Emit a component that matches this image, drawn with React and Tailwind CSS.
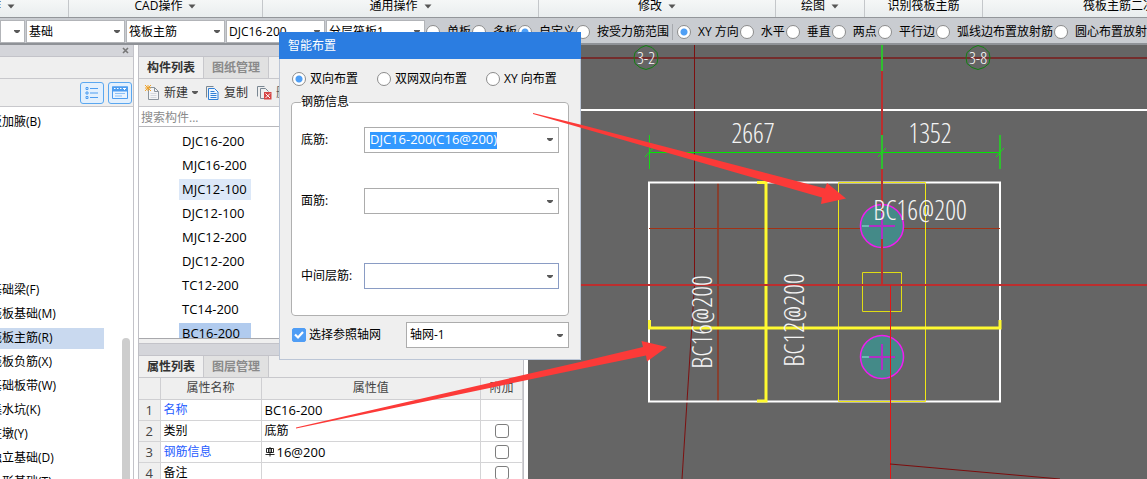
import React from "react";

const UI = "font-['Open_Sans','Noto_Sans_CJK_SC',sans-serif]";
const CAD_FONT = "'Open Sans Condensed Light', 'Roboto Condensed Light', 'Roboto Condensed', 'Liberation Sans Narrow', 'Noto Sans CJK SC', sans-serif";

function Caret({ className = "" }) {
  return (
    <svg viewBox="0 0 8 5" className={`h-[5px] w-2 shrink-0 ${className}`} aria-hidden="true">
      <path d="M0.5 0.5h7L4 4.5z" fill="#555" />
    </svg>
  );
}

function SmallCaret({ className = "" }) {
  return (
    <svg viewBox="0 0 6 4" className={`h-1 w-1.5 shrink-0 ${className}`} aria-hidden="true">
      <path d="M0 0h6v1L4 3H2L0 1z" fill="#5a5a5a" />
    </svg>
  );
}

function RibbonGroup({ label, className, caret = true }) {
  return (
    <div className={`flex h-full shrink-0 items-start overflow-hidden ${className}`}>
      <button type="button" className="flex shrink-0 items-center gap-1.5 text-xs leading-3 whitespace-nowrap">
        {label}
        {caret && <Caret />}
      </button>
    </div>
  );
}

function BarSelect({ label, value, className }) {
  return (
    <div className={`relative h-[23px] shrink-0 border border-[#b2b4b8] bg-white ${className}`}>
      <select aria-label={label} className="h-full w-full appearance-none truncate bg-transparent pl-0.5 text-xs outline-none">
        <option>{value}</option>
      </select>
      <SmallCaret className="pointer-events-none absolute top-[9px] right-1" />
    </div>
  );
}

function Radio({ name, label, checked, tight }) {
  return (
    <label className={`flex shrink-0 items-center whitespace-nowrap ${tight ? "gap-1" : "gap-[7px] pr-px"}`}>
      <input
        type="radio"
        name={name}
        defaultChecked={checked}
        className="h-3.5 w-3.5 shrink-0 appearance-none rounded-full border border-[#8c8c8c] bg-white checked:bg-[radial-gradient(circle,#4f9ff5_0_3px,#fff_4px)]"
      />
      <span>{label}</span>
    </label>
  );
}

const drawModes = ["单板", "多板", "自定义", "按受力筋范围"];
const directions = ["XY 方向", "水平", "垂直", "两点", "平行边", "弧线边布置放射筋", "圆心布置放射筋"];

function Toolbar() {
  return (
    <div className="flex h-[27px] shrink-0 items-start overflow-hidden border-b-2 border-[#8f9297] bg-[#c9ccd1] pt-0.5 text-xs">
      <div className="flex shrink-0 gap-px">
        <BarSelect label="楼层" value="" className="w-[25px]" />
        <BarSelect label="构件大类" value="基础" className="w-[99px]" />
        <BarSelect label="构件类型" value="筏板主筋" className="w-[99px]" />
        <BarSelect label="构件" value="DJC16-200" className="w-[99px]" />
        <BarSelect label="分层" value="分层筏板1" className="w-[99px]" />
      </div>
      <div className="ml-px flex h-[23px] shrink-0 items-center">
        {drawModes.map((m) => (
          <Radio key={m} name="mode" label={m} checked={m === "自定义"} />
        ))}
        <span className="mr-1 ml-0.5 h-4 w-px bg-[#a6a9ae]" />
        {directions.map((m) => (
          <Radio key={m} name="direction" label={m} checked={m === "XY 方向"} />
        ))}
      </div>
    </div>
  );
}

const tree = [
  "筏板基础(M)",
  "筏板主筋(R)",
  "筏板负筋(X)",
  "基础板带(W)",
  "集水坑(K)",
  "柱墩(Y)",
  "独立基础(D)",
  "条形基础(T)",
];

function TreeItem({ label, active }) {
  return (
    <li className="flex h-6 shrink-0 items-center">
      <button type="button" className={`h-[21px] w-[104px] text-left whitespace-nowrap ${active ? "bg-[#c9d9ef]" : ""}`}>
        <span className="-ml-2.5">{label}</span>
      </button>
    </li>
  );
}

function TreePanel() {
  return (
    <aside className="flex w-[134px] shrink-0 flex-col overflow-hidden border-r border-[#c3c3c9] bg-white text-xs">
      <div className="flex h-3 shrink-0 items-center justify-end border-b border-[#c3c3c9] bg-[#d4d5da] pr-1">
        <button type="button" aria-label="关闭">
          <svg viewBox="0 0 7 7" className="h-[7px] w-[7px]">
            <path d="M1 1l5 5M6 1L1 6" stroke="#777" strokeWidth="1.6" />
          </svg>
        </button>
      </div>
      <div className="h-[22px] shrink-0 border-b border-[#c8c8cc] bg-[#efefef]" />
      <div className="flex h-7 shrink-0 items-center justify-end gap-1 border-b border-[#c8c8cc] bg-[#efefef] pr-px">
        <button type="button" aria-label="列表视图" className="flex h-[22px] w-6 items-center justify-center rounded-[3px] border border-[#5aa7f0] bg-[#e3f0fd]">
          <svg viewBox="0 0 14 14" className="h-3.5 w-3.5" fill="none" stroke="#4d9df0">
            <path d="M1 1.5h2v2H1zM1 6h2v2H1zM1 10.500h2v2H1z" />
            <path d="M5 2.500h8M5 7h8M5 11.500h8" />
          </svg>
        </button>
        <button type="button" aria-label="面板视图" className="flex h-[22px] w-6 items-center justify-center rounded-[3px] border border-[#5aa7f0] bg-[#e3f0fd]">
          <svg viewBox="0 0 16 14" className="h-3.5 w-4">
            <path d="M0.500 1h15v11.500h-15z" fill="#e9f4ff" stroke="#4d9df0" />
            <path d="M0 0.500h16v5H0z" fill="#4d9df0" />
            <path d="M2 2.500h1.500M5 2.500h1.500M8 2.500h1.500M11 2.500h3M12.500 2v2" stroke="#fff" />
            <path d="M3 7.500h10M3 10h7" stroke="#8cc0f5" />
          </svg>
        </button>
      </div>
      <div className="flex min-h-0 flex-1">
        <ul className="min-w-0 flex-1 overflow-hidden pt-[3px]">
          <TreeItem label="板加腋(B)" />
          <li className="h-36" aria-hidden="true" />
          <TreeItem label="基础梁(F)" />
          {tree.map((t) => (
            <TreeItem key={t} label={t} active={t === "筏板主筋(R)"} />
          ))}
        </ul>
        <div className="mr-[3px] flex w-2 shrink-0 flex-col pt-[231px]">
          <div className="flex-1 rounded-t bg-[#cdcdcd]" />
        </div>
      </div>
    </aside>
  );
}

function Tabs({ items }) {
  return (
    <div role="tablist" className="flex h-[22px] shrink-0 border-b border-[#c8c8cc] bg-[#efefef] text-xs font-semibold">
      {items.map((t, i) => (
        <button
          key={t}
          type="button"
          role="tab"
          aria-selected={i === 0}
          className={`w-[65px] border-r border-[#c8c8cc] ${i === 0 ? "bg-[#f0f0f0] text-[#333]" : "bg-[#e1e1e1] text-[#8a8a8a]"}`}
        >
          {t}
        </button>
      ))}
    </div>
  );
}

const components = ["DJC16-200", "MJC16-200", "MJC12-100", "DJC12-100", "MJC12-200", "DJC12-200", "TC12-200", "TC14-200", "BC16-200"];

const rows = [
  { name: "名称", value: "BC16-200", blue: true },
  { name: "类别", value: "底筋", check: true },
  { name: "钢筋信息", value: "16@200", blue: true, check: true, rebar: true },
  { name: "备注", value: "", check: true },
];

function RebarSign() {
  return (
    <svg viewBox="0 0 10 10" className="h-2.5 w-2.5" fill="none" stroke="#111" aria-hidden="true">
      <path d="M1.500 1.500h7v4h-7zM3.500 1v5M6.500 1v5M5 0v9.500M0.500 7.500h9" strokeWidth="0.9" />
    </svg>
  );
}

function PropertyTable() {
  return (
    <table className="w-full table-fixed border-collapse bg-white text-xs">
      <colgroup>
        <col className="w-[21px]" />
        <col className="w-[101px]" />
        <col />
        <col className="w-[42px]" />
      </colgroup>
      <thead>
        <tr className="h-[21px] bg-[#efefef] text-[#444]">
          <th className="border-r border-b border-[#cfcfd2] p-0" />
          <th className="border-r border-b border-[#cfcfd2] p-0 font-normal">属性名称</th>
          <th className="border-r border-b border-[#cfcfd2] p-0 font-normal">属性值</th>
          <th className="border-r border-b border-[#cfcfd2] p-0 font-normal">附加</th>
        </tr>
      </thead>
      <tbody>
        {rows.map((r, i) => (
          <tr key={r.name} className="h-[21px]">
            <td className="border-r border-b border-[#d4d4d6] bg-[#efefef] p-0 text-center text-[13px] leading-4 text-[#444]">{i + 1}</td>
            <td className={`border-r border-b border-[#d4d4d6] py-0 pr-0 pl-[3px] leading-4 ${r.blue ? "text-[#1f5cff]" : ""}`}>{r.name}</td>
            <td className="border-r border-b border-[#d4d4d6] py-0 pr-0 pl-[3px] leading-4">
              <span className={`flex items-center gap-0.5 ${r.value === "底筋" ? "" : "text-[13px]"}`}>
                {r.rebar && <RebarSign />}
                {r.value}
              </span>
            </td>
            <td className="border-r border-b border-[#d4d4d6] p-0">
              {r.check && (
                <input type="checkbox" aria-label={`附加 ${r.name}`} className="mx-auto block h-3.5 w-3.5 appearance-none rounded-[3px] border border-[#7d7d7d] bg-white" />
              )}
            </td>
          </tr>
        ))}
      </tbody>
    </table>
  );
}

function ComponentPanel() {
  return (
    <section className="ml-1 flex w-[386px] shrink-0 flex-col overflow-hidden border-r border-l border-[#c0c0c6] bg-[#efefef]">
      <div className="h-3 shrink-0 border-b border-[#c3c3c9] bg-[#d4d5da]" />
      <Tabs items={["构件列表", "图纸管理"]} />
      <div className="flex h-7 shrink-0 items-center border-b border-[#c8c8cc] pl-1.5 text-xs text-[#333]">
        <button type="button" className="flex items-center gap-1">
          <svg viewBox="0 0 15 15" className="h-[15px] w-[15px]" fill="none">
            <path d="M3.500 2.500h6l4 4v8h-10z" fill="#f4f5f6" stroke="#8b949c" />
            <path d="M9.500 2.500v4h4" stroke="#8b949c" />
            <path d="M5.500 8.500h6M5.500 10.500h6M5.500 12.500h6" stroke="#d4d8dc" />
            <path d="M0 0l6 6M6 0L0 6M3 0v6M0 3h6" stroke="#f0a42c" />
          </svg>
          新建
          <SmallCaret />
        </button>
        <button type="button" className="ml-2 flex items-center gap-[5px]">
          <svg viewBox="0 0 13 14" className="h-3.5 w-[13px]" fill="none">
            <path d="M0.500 11.500v-11h7" stroke="#7a8792" />
            <path d="M2.500 2.500h6l3.500 3.500v7.500H2.500z" fill="#eef6ff" stroke="#2f7fd6" />
            <path d="M4.500 5.500h4M4.500 7.500h6M4.500 9.500h6M4.500 11.500h6" stroke="#2f7fd6" />
          </svg>
          复制
        </button>
        <button type="button" className="ml-[9px] flex items-center gap-1 text-[#555]">
          <svg viewBox="0 0 15 14" className="h-3.5 w-[15px]" fill="none">
            <path d="M0.500 10.500v-10h7M7 12.500H3.500v-10h5l3 3" stroke="#7a8792" />
            <path d="M7 6h7.500v7.500H7z" fill="#d64545" />
            <path d="M8.500 7.500l4.500 4.500M13 7.500L8.500 12" stroke="#fff" />
          </svg>
          删除
        </button>
      </div>
      <input
        aria-label="搜索构件"
        placeholder="搜索构件..."
        className="h-[20px] shrink-0 border-b border-[#b8b8bc] bg-white pt-px pl-0.5 text-xs outline-none placeholder:text-[#8a8a8a]"
      />
      <ul className="h-[212px] shrink-0 overflow-hidden border-b border-[#a8a8ac] bg-white pt-0.5 text-[13px]">
        {components.map((c) => (
          <li key={c} className="flex h-6 items-center pl-10">
            <button
              type="button"
              className={`h-[21px] w-[72px] pl-[3px] text-left leading-[21px] ${
                c === "MJC12-100" ? "bg-[#dce8f8]" : c === "BC16-200" ? "bg-[#b1cbee]" : ""
              }`}
            >
              {c}
            </button>
          </li>
        ))}
      </ul>
      <div className="mt-1 h-[13px] shrink-0 border-t border-b border-[#c3c3c9] bg-[#d4d5da]" />
      <Tabs items={["属性列表", "图层管理"]} />
      <PropertyTable />
    </section>
  );
}

function Pile({ cx, cy }) {
  return (
    <g>
      <circle cx={cx} cy={cy} r="21.500" fill="#448a88" stroke="#f01cf0" strokeWidth="1.500" />
      <path d={`M${cx - 20} ${cy}h7`} stroke="#6cb8b4" strokeWidth="2" />
      <path d={`M${cx - 13} ${cy}h26M${cx} ${cy - 13}v26`} stroke="#b02fc4" strokeWidth="2" />
    </g>
  );
}

function AxisBubble({ cx, label }) {
  return (
    <g>
      <path
        d={`M${cx - 5} 47.500l5 -2 6 2 5 5 1 5 -1 6 -5 4 -6 2 -6 -2 -5 -4 -1 -6 1 -5z`}
        fill="none"
        stroke="#128012"
      />
      <text x={cx} y="64" textAnchor="middle" fontSize="17" fill="#fff" fontFamily={CAD_FONT}>
        {label}
      </text>
    </g>
  );
}

function Drawing() {
  return (
    <main className="ml-1 min-w-0 flex-1 overflow-hidden bg-[#656565]">
      <svg viewBox="528 45 619 434" preserveAspectRatio="xMinYMin slice" className="block h-full w-full" fill="none" role="img" aria-label="筏板平面图">
        <path d="M528 58h619" stroke="#742c2c" strokeWidth="2" />
        <path d="M694.500 45v240L682 479" stroke="#7d1010" />
        <path d="M528 110h619" stroke="#fff" strokeWidth="2" />
        <path d="M718 183v219" stroke="#86402f" strokeWidth="2" />
        <path d="M649 182.500h351v219H649z" stroke="#fff" strokeWidth="2" />
        <path d="M649 228.500h351" stroke="#a13216" />
        <path d="M838.500 182.500h87v219h-87z" stroke="#f0e814" />
        <path d="M757 182.500h9V401h-9M649.500 320v8H1000v-8" stroke="#fffa30" strokeWidth="3" />
        <path d="M862.500 272.500h39v39h-39z" stroke="#e0dc14" />
        <Pile cx={882} cy={226} />
        <Pile cx={882} cy={357} />
        <path d="M528 285h619" stroke="#bb2e2e" strokeWidth="2" />
        <path d="M882 71v142M882 239v46" stroke="#bb2e2e" strokeWidth="2" />
        <path d="M890.500 285v194" stroke="#e21616" />
        <path d="M890 464l170 15" stroke="#7d0c0c" />
        <path d="M649.500 152.500H1000" stroke="#00e800" />
        <path d="M882 45v26M882 135v34M1000 135v34" stroke="#2fbf2f" strokeWidth="2" />
        <path d="M649.500 135v34M645 157l8 -9M878 157l8 -9M996 157l8 -9" stroke="#14dc14" />
        <AxisBubble cx={646} label="3-2" />
        <AxisBubble cx={978} label="3-8" />
        <g fill="#f4f4f4" fontSize="27" fontWeight="300" fontFamily={CAD_FONT} textAnchor="middle">
          <text x="753" y="143">2667</text>
          <text x="930" y="143">1352</text>
          <text x="920" y="220">BC16@200</text>
          <text x="712" y="322" transform="rotate(-90 712 322)">BC16@200</text>
          <text x="804" y="320" transform="rotate(-90 804 320)">BC12@200</text>
        </g>
      </svg>
    </main>
  );
}

function FieldRow({ id, label, className = "", children }) {
  return (
    <div className={`flex h-[26px] items-center ${className}`}>
      <label htmlFor={id} className="w-[63px] shrink-0">
        {label}
      </label>
      {children}
    </div>
  );
}

function FormSelect({ id, value = "", className = "", ...rest }) {
  return (
    <div className={`relative h-[26px] border bg-white ${className}`}>
      <select id={id} className="h-full w-full appearance-none bg-transparent pl-[3px] outline-none" {...rest}>
        <option>{value}</option>
      </select>
      <SmallCaret className="pointer-events-none absolute top-[11px] right-[5px]" />
    </div>
  );
}

function Dialog() {
  return (
    <div role="dialog" aria-label="智能布置" className="absolute top-8 left-[279px] w-[302px] border-r border-b border-l border-[#bcc6d6] bg-[#efefef] text-xs">
      <h2 className="-mx-px flex h-[27px] items-center bg-[#2b7de1] pl-[9px] text-white">智能布置</h2>
      <div className="px-[11px] pt-[13px] pb-[11px]">
        <div className="flex h-3.5 items-center gap-[19px] pl-px">
          <Radio name="layout" label="双向布置" checked tight />
          <Radio name="layout" label="双网双向布置" tight />
          <Radio name="layout" label="XY 向布置" tight />
        </div>
        <fieldset className="mt-[7px] min-w-0 rounded-[4px] border border-[#b0b0b0] bg-white px-[9px] pb-[26px]">
          <legend className="h-[18px] leading-[18px]">钢筋信息</legend>
          <FieldRow id="bottom" label="底筋:" className="mt-4">
            <div className="flex h-[26px] min-w-0 flex-1 items-center justify-between border border-[#acacac] bg-white px-[5px]">
              <input
                id="bottom"
                defaultValue="DJC16-200(C16@200)"
                className="h-[17px] bg-[#3399ff] text-[13px] text-white outline-none [field-sizing:content]"
              />
              <button type="button" aria-label="展开">
                <SmallCaret />
              </button>
            </div>
          </FieldRow>
          <FieldRow id="top" label="面筋:" className="mt-[35px]">
            <FormSelect id="top" className="flex-1 border-[#acacac]" />
          </FieldRow>
          <FieldRow id="middle" label="中间层筋:" className="mt-[49px]">
            <FormSelect id="middle" className="flex-1 border-[#8a9cc4]" />
          </FieldRow>
        </fieldset>
        <div className="mt-1.5 flex items-center justify-between pl-px">
          <label className="relative flex items-center gap-[3px]">
            <input type="checkbox" defaultChecked className="peer h-3.5 w-3.5 appearance-none rounded-[2px] border border-[#8c8c8c] bg-white checked:border-[#4f9df5] checked:bg-[#4f9df5]" />
            <svg viewBox="0 0 14 14" className="pointer-events-none invisible absolute left-0 h-3.5 w-3.5 peer-checked:visible" fill="none" aria-hidden="true">
              <path d="M3 6.500l3 3L11 4" stroke="#fff" strokeWidth="2.2" />
            </svg>
            选择参照轴网
          </label>
          <FormSelect id="axis" aria-label="轴网" value="轴网-1" className="w-[163px] border-[#acacac]" />
        </div>
      </div>
    </div>
  );
}

function Arrows() {
  return (
    <svg viewBox="0 0 1147 479" className="pointer-events-none absolute top-0 left-0 h-[479px] w-[1147px]" fill="#fc3a38" aria-hidden="true">
      <path d="M533 113L580 124.500 825 188.500 827 183 846 198.500 821 204 822 197.500 580 127.500 533 114z" />
      <path d="M296 427.500L580 362 643 347 641.500 341 667 347 647 361.500 646 355.500 580 369 296 428.500z" />
    </svg>
  );
}

export default function App() {
  return (
    <div className={`relative flex h-screen flex-col overflow-hidden bg-white text-black ${UI}`}>
      <header className="flex h-[18px] shrink-0 overflow-hidden border-b border-[#93969a] bg-gradient-to-b from-[#f5f7f7] to-[#e9edee]">
        <RibbonGroup label="操作" className="w-[69px] justify-end border-r border-[#c4c7ca] pr-[53px]" />
        <RibbonGroup label="CAD操作" className="w-[194px] justify-center border-r border-[#c4c7ca]" />
        <RibbonGroup label="通用操作" className="w-[276px] justify-center border-r border-[#c4c7ca]" />
        <RibbonGroup label="修改" className="w-[237px] justify-center border-r border-[#c4c7ca]" />
        <RibbonGroup label="绘图" className="w-[89px] justify-center border-r border-[#c4c7ca]" />
        <RibbonGroup label="识别筏板主筋" caret={false} className="w-[118px] justify-center border-r border-[#c4c7ca]" />
        <RibbonGroup label="筏板主筋二次编辑" caret={false} className="flex-1 pl-[100px]" />
      </header>
      <Toolbar />
      <div className="flex min-h-0 flex-1">
        <TreePanel />
        <ComponentPanel />
        <Drawing />
      </div>
      <Dialog />
      <Arrows />
    </div>
  );
}
